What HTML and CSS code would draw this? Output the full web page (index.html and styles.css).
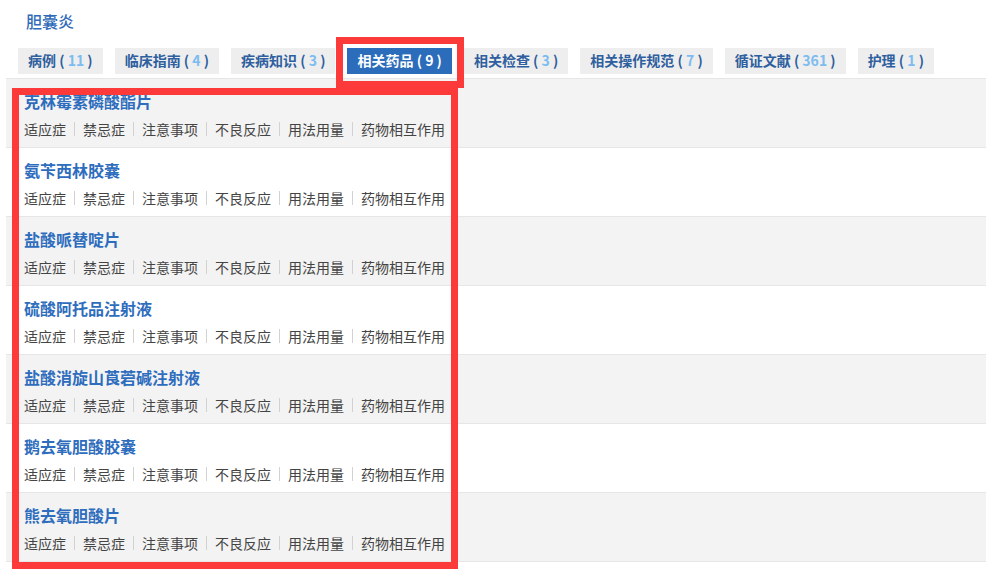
FILE: index.html
```html
<!DOCTYPE html>
<html lang="zh-CN">
<head>
  <meta charset="UTF-8">
  <meta name="viewport" content="width=device-width, initial-scale=1.0">
  <title>胆囊炎 - 相关药品</title>
  <link rel="stylesheet" href="styles.css">
</head>
<body>
  <div class="page">
    <h2 class="title">胆囊炎</h2>

    <ul class="tabs">
      <li class="tab">病例 ( <span class="num">11</span> )</li>
      <li class="tab">临床指南 ( <span class="num">4</span> )</li>
      <li class="tab">疾病知识 ( <span class="num">3</span> )</li>
      <li class="tab tab-active">相关药品 ( <span class="num">9</span> )</li>
      <li class="tab">相关检查 ( <span class="num">3</span> )</li>
      <li class="tab">相关操作规范 ( <span class="num">7</span> )</li>
      <li class="tab">循证文献 ( <span class="num">361</span> )</li>
      <li class="tab">护理 ( <span class="num">1</span> )</li>
    </ul>

    <ul class="drugs">
      <li class="drug">
        <a class="drug-name">克林霉素磷酸酯片</a>
        <div class="drug-links">
          <a>适应症</a><i class="sep"></i><a>禁忌症</a><i class="sep"></i><a>注意事项</a><i class="sep"></i><a>不良反应</a><i class="sep"></i><a>用法用量</a><i class="sep"></i><a>药物相互作用</a>
        </div>
      </li>
      <li class="drug">
        <a class="drug-name">氨苄西林胶囊</a>
        <div class="drug-links">
          <a>适应症</a><i class="sep"></i><a>禁忌症</a><i class="sep"></i><a>注意事项</a><i class="sep"></i><a>不良反应</a><i class="sep"></i><a>用法用量</a><i class="sep"></i><a>药物相互作用</a>
        </div>
      </li>
      <li class="drug">
        <a class="drug-name">盐酸哌替啶片</a>
        <div class="drug-links">
          <a>适应症</a><i class="sep"></i><a>禁忌症</a><i class="sep"></i><a>注意事项</a><i class="sep"></i><a>不良反应</a><i class="sep"></i><a>用法用量</a><i class="sep"></i><a>药物相互作用</a>
        </div>
      </li>
      <li class="drug">
        <a class="drug-name">硫酸阿托品注射液</a>
        <div class="drug-links">
          <a>适应症</a><i class="sep"></i><a>禁忌症</a><i class="sep"></i><a>注意事项</a><i class="sep"></i><a>不良反应</a><i class="sep"></i><a>用法用量</a><i class="sep"></i><a>药物相互作用</a>
        </div>
      </li>
      <li class="drug">
        <a class="drug-name">盐酸消旋山莨菪碱注射液</a>
        <div class="drug-links">
          <a>适应症</a><i class="sep"></i><a>禁忌症</a><i class="sep"></i><a>注意事项</a><i class="sep"></i><a>不良反应</a><i class="sep"></i><a>用法用量</a><i class="sep"></i><a>药物相互作用</a>
        </div>
      </li>
      <li class="drug">
        <a class="drug-name">鹅去氧胆酸胶囊</a>
        <div class="drug-links">
          <a>适应症</a><i class="sep"></i><a>禁忌症</a><i class="sep"></i><a>注意事项</a><i class="sep"></i><a>不良反应</a><i class="sep"></i><a>用法用量</a><i class="sep"></i><a>药物相互作用</a>
        </div>
      </li>
      <li class="drug">
        <a class="drug-name">熊去氧胆酸片</a>
        <div class="drug-links">
          <a>适应症</a><i class="sep"></i><a>禁忌症</a><i class="sep"></i><a>注意事项</a><i class="sep"></i><a>不良反应</a><i class="sep"></i><a>用法用量</a><i class="sep"></i><a>药物相互作用</a>
        </div>
      </li>
    </ul>

    <!-- red annotation frames -->
    <div class="mark mark-tab"></div>
    <div class="mark mark-list"></div>
  </div>
</body>
</html>
```

FILE: styles.css
```css
body {
  margin: 0;
  font-family: "Noto Sans CJK SC", "Liberation Sans", sans-serif;
  color: #444;
  background: #fff;
}

ul {
  list-style: none;
  margin: 0;
  padding: 0;
}

.page {
  position: relative;
  width: 980px;
  min-height: 573px;
  padding-left: 6px;
}

.title {
  margin: 0;
  padding: 11px 0 0 20px;
  font-size: 16px;
  line-height: 20px;
  font-weight: 500;
  color: #2f6bb8;
}

.tabs {
  display: flex;
  gap: 12px;
  margin: 17px 0 4px 12px;
}

.tab {
  padding: 0 10px;
  height: 26px;
  line-height: 25px;
  font-size: 14px;
  font-weight: 700;
  color: #2f5f9e;
  background: #eeeeee;
  white-space: nowrap;
  cursor: pointer;
}

.tab .num {
  color: #7dbcf0;
}

.tab-active {
  background: #2b6dbb;
  color: #fff;
}

.tab-active .num {
  color: #fff;
}

.drugs {
  border-top: 1px solid #e6e6e6;
}

.drug {
  height: 68px;
  padding-left: 18px;
  border-bottom: 1px solid #e6e6e6;
}

.drug:nth-child(odd) {
  background: #f3f3f3;
}

.drug-name {
  display: block;
  padding-top: 11px;
  font-size: 16px;
  line-height: 22px;
  font-weight: 700;
  color: #2e6dbd;
  cursor: pointer;
}

.drug-links {
  display: flex;
  align-items: center;
  margin-top: 7px;
  font-size: 14px;
  line-height: 20px;
}

.drug-links a {
  color: #444;
  cursor: pointer;
}

.sep {
  width: 1px;
  height: 14px;
  margin: 0 8px;
  background: #d2d2d2;
}

.mark {
  position: absolute;
  box-sizing: border-box;
  border: 7px solid #fd3a3a;
}

.mark-tab {
  left: 336px;
  top: 37px;
  width: 128px;
  height: 51px;
}

.mark-list {
  left: 12px;
  top: 88px;
  width: 446px;
  height: 481px;
}
```
